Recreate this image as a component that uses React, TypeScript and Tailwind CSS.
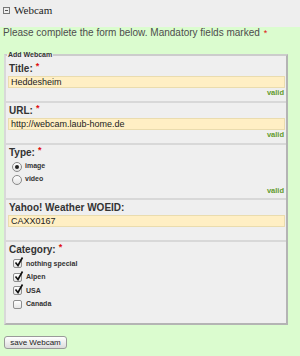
import React from "react";

const sans = "font-['Liberation_Sans',Arial,sans-serif]";

function Req() {
  return <span className="ml-[3px] align-top text-[9px] leading-[9px] text-[#e01010]">*</span>;
}

function Valid({ show = true }: { show?: boolean }) {
  return (
    <div className="h-[10px] pr-[1px] text-right text-[7.5px] font-bold leading-[10px] text-[#5f9a2c]">
      {show ? "valid" : ""}
    </div>
  );
}

function Label({ text, required }: { text: string; required?: boolean }) {
  return (
    <div className="h-[14px] pl-[1px] text-[10px] font-bold leading-[14px] text-[#333]">
      {text}
      {required && <Req />}
    </div>
  );
}

function TextInput({ value }: { value: string }) {
  return (
    <div className="h-[12px] border border-[#eadcae] bg-[#ffefc4] pl-[2px] text-[9px] leading-[10px] text-[#222]">
      {value}
    </div>
  );
}

function Radio({ label, checked }: { label: string; checked?: boolean }) {
  return (
    <div className="flex h-[13px] items-center gap-[3px] pl-[4px]">
      <span className="flex h-[10px] w-[10px] items-center justify-center rounded-full border border-[#8a8a8a] bg-gradient-to-b from-white to-[#e4e4e4]">
        {checked && <span className="h-[4px] w-[4px] rounded-full bg-[#222]" />}
      </span>
      <span className="text-[7px] font-bold text-[#333]">{label}</span>
    </div>
  );
}

function Check({ label, checked }: { label: string; checked?: boolean }) {
  return (
    <div className="flex h-[13.5px] items-center gap-[4px] pl-[5px]">
      <span className="relative h-[9px] w-[9px] rounded-[2px] border border-[#8f8f8f] bg-gradient-to-b from-white to-[#e6e6e6]">
        {checked && (
          <svg viewBox="0 0 10 10" className="absolute left-[0px] top-[-3px] h-[10px] w-[10px]">
            <path d="M1.5 5.5 L4 8.5 L8.5 0.5" fill="none" stroke="#111" strokeWidth="1.6" />
          </svg>
        )}
      </span>
      <span className="text-[7px] font-bold text-[#333]">{label}</span>
    </div>
  );
}

export default function App() {
  return (
    <div className={`flex h-[356px] w-[300px] flex-col bg-[#eeeeee] ${sans}`}>
      {/* Header */}
      <div className="flex h-[27px] items-start gap-[4px] pl-[3px] pt-[3px]">
        <span className="mt-[4px] flex h-[7px] w-[7px] items-center justify-center border border-[#777]">
          <span className="h-px w-[3px] bg-[#555]" />
        </span>
        <span className="font-['Liberation_Serif','Times_New_Roman',serif] text-[11px] leading-[14px] text-[#222]">
          Webcam
        </span>
      </div>

      {/* Form area */}
      <div className="flex-1 bg-[#dbfccf] pl-[3px]">
        <p className="text-[10px] leading-[12px] text-[#4d4d4d]">
          Please complete the form below. Mandatory fields marked
          <span className="ml-[4px] align-top text-[9px] text-[#e01010]">*</span>
        </p>

        <fieldset className="ml-[1px] mt-[11px] w-[284px] border-2 border-b-[#b4b4b4] border-l-[#d9d9d9] border-r-[#b4b4b4] border-t-[#cccccc] bg-[#efefef]">
          <legend className="ml-[1px] px-[1px] text-[7px] font-bold leading-[9px] text-[#333]">Add Webcam</legend>

          <div className="border-b-2 border-[#d8d8d8] pb-[3px] pl-[2px] pr-[1px] pt-[3px]">
            <Label text="Title:" required />
            <TextInput value="Heddesheim" />
            <Valid />
          </div>

          <div className="border-b-2 border-[#d8d8d8] pb-[3px] pl-[2px] pr-[1px] pt-[1px]">
            <Label text="URL:" required />
            <TextInput value="http://webcam.laub-home.de" />
            <Valid />
          </div>

          <div className="border-b-2 border-[#d8d8d8] pb-[2px] pl-[2px] pr-[1px] pt-[1px]">
            <Label text="Type:" required />
            <Radio label="image" checked />
            <Radio label="video" />
            <Valid />
          </div>

          <div className="border-b-2 border-[#d8d8d8] pb-[3px] pl-[2px] pr-[1px] pt-[1px]">
            <Label text="Yahoo! Weather WOEID:" />
            <TextInput value="CAXX0167" />
            <Valid show={false} />
          </div>

          <div className="pb-[12px] pl-[2px] pr-[1px] pt-[1px]">
            <Label text="Category:" required />
            <Check label="nothing special" checked />
            <Check label="Alpen" checked />
            <Check label="USA" checked />
            <Check label="Canada" />
          </div>
        </fieldset>

        <button className="ml-[1px] mt-[11px] h-[13px] w-[63px] rounded-[3px] border border-[#9a9a9a] bg-gradient-to-b from-white to-[#dcdcdc] text-[8px] leading-[11px] text-[#222]">
          save Webcam
        </button>
      </div>
    </div>
  );
}
